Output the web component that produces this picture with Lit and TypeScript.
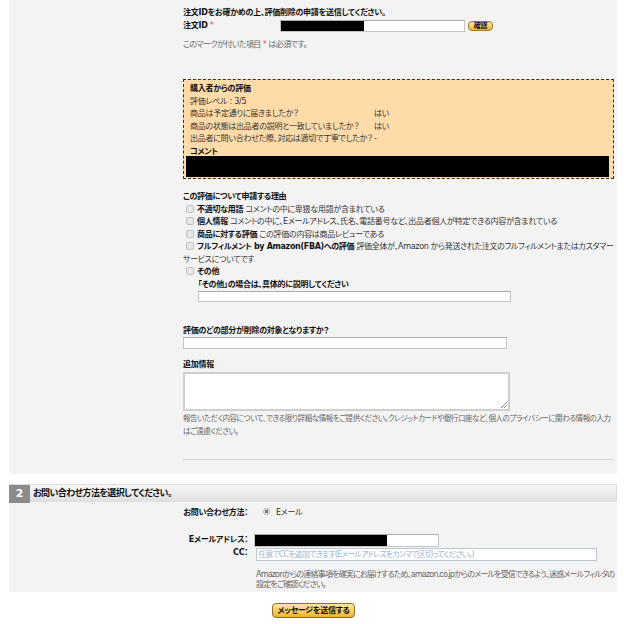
import { LitElement, html, css } from "lit";
import { customElement } from "lit/decorators.js";

@customElement("app-root")
export class AppRoot extends LitElement {
  static styles = css`
    :host { display: block; width: 624px; height: 624px; overflow: hidden; background: #fff; font-family: "DejaVu Sans", "Noto Sans CJK JP", sans-serif; font-size: 8px; line-height: 12.5px; letter-spacing: -0.27px; color: #333; font-feature-settings: "palt"; }
    * { box-sizing: border-box; }
    b, .b { font-weight: 700; color: #111; }
    .req { color: #e47; }
    .page { padding: 0 7px 0 9px; }
    .panel { background: #f3f3f3; }
    .p1 { height: 474px; padding: 7px 3px 0 174px; }
    .field { background: #fff; border: 1px solid #c4c4c4; border-top-color: #aaa; display: flex; overflow: hidden; }
    .mute { color: #666; }
    .idrow { display: flex; align-items: flex-start; height: 13px; }
    .idlab { width: 97px; }
    .idf { width: 185px; height: 12px; }
    .idf .redact { height: 15px; width: 84px; margin: -1px 0 0 -1px; }
    .redact { background: #000; flex: none; }
    .small-btn { margin: 1px 0 0 3px; width: 25px; height: 10px; border-radius: 4px; border: 1px solid #9a7a2c; background: linear-gradient(#fbe3a0, #eeb933); font-size: 7px; line-height: 8px; text-align: center; color: #113; font-weight: 700; }
    .note { margin-top: 6px; letter-spacing: -0.55px; }
    .box { margin-top: 28px; width: 431px; height: 100px; background: #fedba9; border: 1px dashed #333; padding: 3px 4px 0 2px; }
    .box .t { padding-left: 4px; }
    .qrow { display: grid; grid-template-columns: 184px auto; padding-left: 4px; white-space: nowrap; }
    .box .redact { height: 21px; margin-top: -2px; position: relative; }
    .s { margin-top: 12px; }
    .s h4, .lab { margin: 0; font-size: inherit; font-weight: 700; color: #111; }
    .check { display: block; padding-left: 3px; }
    .check.flush { padding-left: 0; letter-spacing: -0.33px; }
    .check.flush .cb { margin-left: 3px; }
    .cb { display: inline-block; width: 8px; height: 8px; border: 1px solid #c2c2c2; border-radius: 2px; background: #e6e6e6; margin-right: 3px; vertical-align: -1px; }
    .other { padding-left: 15px; }
    .in1 { width: 313px; height: 11px; }
    .s2 { margin-top: 23px; }
    .in2 { width: 324px; height: 12px; margin-top: -1px; position: relative; }
    .s3 { margin-top: 10px; }
    .ta { width: 327px; height: 39px; margin-top: 1px; display: block; position: relative; border: 2px solid #cfcfcf; }
    .grip { position: absolute; right: 0; bottom: 0; }
    .help { margin-top: 2px; width: 431px; font-size: 7.5px; letter-spacing: -0.42px; }
    hr { border: 0; border-top: 1px solid #d6d6d6; margin: 21px 0 0; width: 431px; }
    .head { margin-top: 10px; height: 18px; display: flex; align-items: center; background: linear-gradient(#f8f8f8, #dedede); border: 1px solid #ddd; border-left: 0; border-bottom: 0; font-weight: 700; font-size: 9px; letter-spacing: -0.6px; color: #111; }
    .num { width: 21px; height: 18px; background: #8b8b8b; color: #fff; font: 700 11px/18px "DejaVu Sans", sans-serif; text-align: center; margin-right: 3px; letter-spacing: 0; }
    .p2 { height: 90px; padding-top: 5px; display: grid; grid-template-columns: 239px 1fr; grid-auto-rows: min-content; align-items: center; }
    .rl { text-align: right; font-weight: 700; color: #111; }
    .v { padding-left: 8px; }
    .radio { display: inline-block; width: 7px; height: 7px; border: 1px solid #aaa; border-radius: 50%; background: radial-gradient(circle, #777 0 1.5px, #eee 2px); margin: 0 6px 0 7px; }
    .r2 { margin-top: 14px; }
    .em { width: 185px; height: 13px; margin-left: -2px; }
    .em .redact { width: 132px; height: 11px; }
    .cc { width: 341px; height: 13px; padding: 0 1px; color: #9db4cf; margin-top: 1px; line-height: 11px; border-color: #bcc5cf; white-space: nowrap; letter-spacing: -0.85px; }
    .r3 { grid-column: 2; padding-left: 8px; margin-top: 9px; line-height: 10px; width: 368px; letter-spacing: -0.82px; }
    .send { margin: 11px 0 0 263px; width: 83px; height: 15px; display: block; border-radius: 4px; border: 1px solid #8f6f22; background: linear-gradient(#fce7a8, #efb52c); color: #111; font-weight: 700; line-height: 13px; text-align: center; font-size: 8px; letter-spacing: -0.3px; }
  `;

  render() {
    return html`<div class="page">
      <div class="panel p1">
        <div class="b">注文IDをお確かめの上、評価削除の申請を送信してください。</div>
        <div class="idrow">
          <div class="idlab"><b>注文ID</b> <span class="req">*</span></div>
          <div class="field idf"><div class="redact"></div></div>
          <div class="small-btn">確認</div>
        </div>
        <div class="note mute">このマークが付いた項目 <span class="req">*</span> は必須です。</div>
        <div class="box">
          <div class="t b">購入者からの評価</div>
          <div class="t">評価レベル : 3/5</div>
          <div class="qrow"><span>商品は予定通りに届きましたか？</span><span>はい</span></div>
          <div class="qrow"><span>商品の状態は出品者の説明と一致していましたか？</span><span>はい</span></div>
          <div class="qrow"><span>出品者に問い合わせた際、対応は適切で丁寧でしたか？</span><span>-</span></div>
          <div class="t b">コメント</div>
          <div class="redact"></div>
        </div>
        <div class="s">
          <h4>この評価について申請する理由</h4>
          <div class="check"><span class="cb"></span><b>不適切な用語</b> コメントの中に卑猥な用語が含まれている</div>
          <div class="check"><span class="cb"></span><b>個人情報</b> コメントの中に、Eメールアドレス、氏名、電話番号など、出品者個人が特定できる内容が含まれている</div>
          <div class="check"><span class="cb"></span><b>商品に対する評価</b> この評価の内容は商品レビューである</div>
          <div class="check flush"><span class="cb"></span><b>フルフィルメント by Amazon(FBA)への評価</b> 評価全体が、Amazon から発送された注文のフルフィルメントまたはカスタマーサービスについてです</div>
          <div class="check"><span class="cb"></span><b>その他</b></div>
          <div class="other">
            <div class="lab">「その他」の場合は、具体的に説明してください</div>
            <div class="field in1"></div>
          </div>
        </div>
        <div class="s2">
          <div class="lab">評価のどの部分が削除の対象となりますか？</div>
          <div class="field in2"></div>
        </div>
        <div class="s3">
          <div class="lab">追加情報</div>
          <div class="field ta">
            <svg class="grip" width="8" height="8" viewBox="0 0 8 8"><path d="M7 1 1 7M7 4 4 7" stroke="#888" fill="none"/></svg>
          </div>
          <div class="help mute">報告いただく内容について、できる限り詳細な情報をご提供ください。クレジットカードや銀行口座など、個人のプライバシーに関わる情報の入力はご遠慮ください。</div>
          <hr />
        </div>
      </div>
      <div class="head"><div class="num">2</div>お問い合わせ方法を選択してください。</div>
      <div class="panel p2">
        <div class="rl">お問い合わせ方法：</div>
        <div class="v"><span class="radio"></span>Eメール</div>
        <div class="rl r2">Eメールアドレス：</div>
        <div class="v r2"><div class="field em"><div class="redact"></div></div></div>
        <div class="rl">CC：</div>
        <div class="v"><div class="field cc">任意でCCを追加できます(Eメールアドレスをカンマで区切ってください。)</div></div>
        <div class="r3 mute">Amazonからの連絡事項を確実にお届けするため、amazon.co.jpからのメールを受信できるよう、迷惑メールフィルタの設定をご確認ください。</div>
      </div>
      <div class="send">メッセージを送信する</div>
    </div>`;
  }
}
